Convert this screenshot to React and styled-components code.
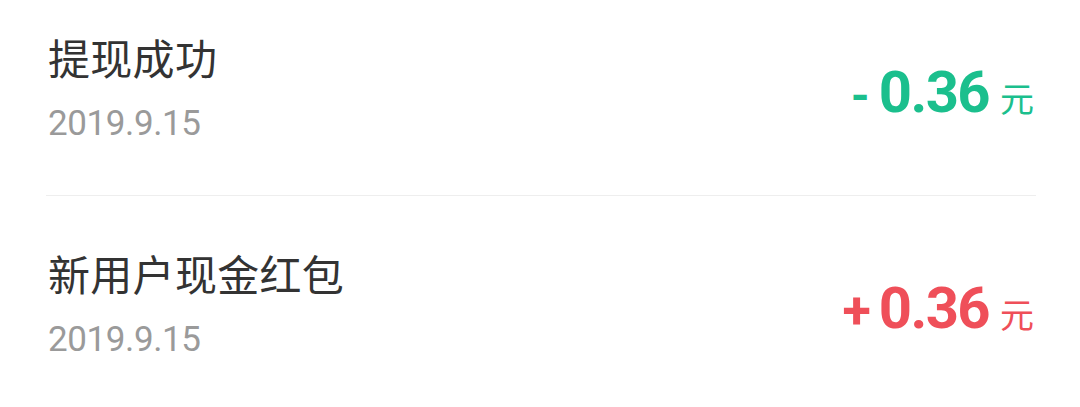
import React from "react";
import styled, { createGlobalStyle } from "styled-components";

const Global = createGlobalStyle`
  html, body { margin: 0; padding: 0; background: #ffffff; }
  body { overflow: hidden; }
`;

const Page = styled.div`
  width: 1080px;
  height: 407px;
  overflow: hidden;
  background: #fff;
  font-family: Roboto, "Noto Sans CJK SC", sans-serif;
`;

const List = styled.ul`
  list-style: none;
  margin: -20px 0 0 0;
  padding: 0 44px 0 46px;
`;

const Row = styled.li`
  display: flex;
  align-items: center;
  justify-content: space-between;
  height: 216px;
  box-sizing: border-box;
  border-bottom: 1px solid ${(p) => (p.$last ? "transparent" : "#eeeeee")};
`;

const Info = styled.div`
  display: flex;
  flex-direction: column;
  gap: 22px;
  padding-left: 2px;
`;

const Title = styled.div`
  font-family: "Noto Sans CJK SC", sans-serif;
  font-size: 42px;
  line-height: 50px;
  color: #333333;
  letter-spacing: 0.3px;
`;

const DateText = styled.div`
  font-family: Roboto, sans-serif;
  font-size: 35px;
  line-height: 40px;
  color: #9a9a9a;
  letter-spacing: -0.4px;
`;

const Amount = styled.div`
  display: flex;
  align-items: baseline;
  margin-top: 8px;
  margin-right: 2px;
  color: ${(p) => (p.$income ? "#ef4f59" : "#1bbf8d")};
`;

const Sign = styled.span`
  font-family: Roboto, sans-serif;
  font-weight: 700;
  font-size: ${(p) => (p.$plus ? "52px" : "48px")};
  line-height: 1;
  margin-right: ${(p) => (p.$plus ? "8px" : "9px")};
`;

const Value = styled.span`
  font-family: Roboto, sans-serif;
  font-weight: 700;
  font-size: 58px;
  line-height: 1;
  letter-spacing: -1.6px;
`;

const Unit = styled.span`
  font-family: "Noto Sans CJK SC", sans-serif;
  font-size: 34px;
  line-height: 1;
  margin-left: 11px;
`;

const records = [
  { title: "提现成功", date: "2019.9.15", income: false, value: "0.36" },
  { title: "新用户现金红包", date: "2019.9.15", income: true, value: "0.36" },
];

export default function App() {
  return (
    <Page>
      <Global />
      <List>
        {records.map((r, i) => (
          <Row key={i} $last={i === records.length - 1}>
            <Info>
              <Title>{r.title}</Title>
              <DateText>{r.date}</DateText>
            </Info>
            <Amount $income={r.income}>
              <Sign $plus={r.income}>{r.income ? "+" : "-"}</Sign>
              <Value>{r.value}</Value>
              <Unit>元</Unit>
            </Amount>
          </Row>
        ))}
      </List>
    </Page>
  );
}
